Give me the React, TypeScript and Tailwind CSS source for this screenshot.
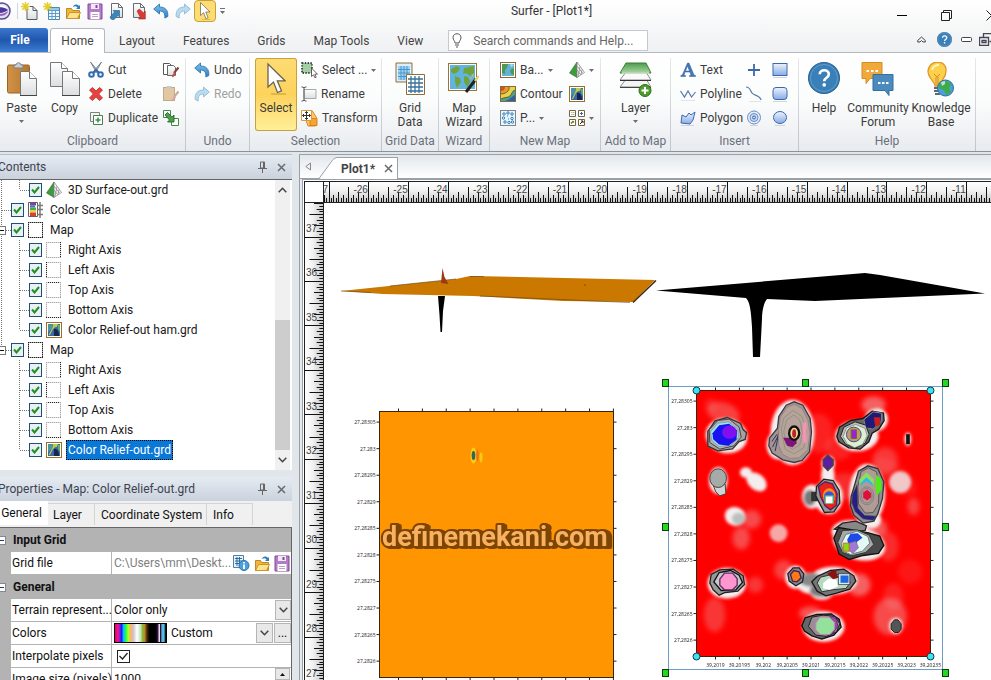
import type { ReactNode } from "react";

/* ---------- shared gradients ---------- */

function Defs() {
  return (
    <svg className="absolute h-0 w-0" aria-hidden="true">
      <defs>
        <linearGradient id="page" x1="0" y1="0" x2="0" y2="1">
          <stop offset="0" stopColor="#ffffff" />
          <stop offset="1" stopColor="#dcdee0" />
        </linearGradient>
        <linearGradient id="blueBox" x1="0" y1="0" x2="0" y2="1">
          <stop offset="0" stopColor="#eef4fd" />
          <stop offset="1" stopColor="#86abe6" />
        </linearGradient>
        <linearGradient id="blueArrow" x1="0" y1="0" x2="0" y2="1">
          <stop offset="0" stopColor="#7cc4ee" />
          <stop offset="1" stopColor="#2b7fc4" />
        </linearGradient>
        <linearGradient id="greenSheet" x1="0" y1="0" x2="0" y2="1">
          <stop offset="0" stopColor="#4d9a4b" />
          <stop offset="1" stopColor="#a9d6a2" />
        </linearGradient>
        <linearGradient id="clip" x1="0" y1="0" x2="1" y2="0">
          <stop offset="0" stopColor="#cf9347" />
          <stop offset="1" stopColor="#b8762c" />
        </linearGradient>
        <linearGradient id="rulerH" x1="0" y1="0" x2="0" y2="1">
          <stop offset="0" stopColor="#ffffff" />
          <stop offset="0.4" stopColor="#f2f2f2" />
          <stop offset="1" stopColor="#c4c4c4" />
        </linearGradient>
        <linearGradient id="rulerV" x1="0" y1="0" x2="1" y2="0">
          <stop offset="0" stopColor="#ffffff" />
          <stop offset="0.4" stopColor="#f2f2f2" />
          <stop offset="1" stopColor="#c4c4c4" />
        </linearGradient>
        <filter id="soft" x="-30%" y="-30%" width="160%" height="160%">
          <feGaussianBlur stdDeviation="4" />
        </filter>
        <filter id="softer" x="-30%" y="-30%" width="160%" height="160%">
          <feGaussianBlur stdDeviation="8" />
        </filter>
      </defs>
    </svg>
  );
}

/* ---------- icons ---------- */

function Ico({ children, w = 16, h = 16, box }: { children: ReactNode; w?: number; h?: number; box?: string }) {
  return (
    <svg width={w} height={h} viewBox={box ?? `0 0 ${w} ${h}`} fill="none" className="block shrink-0" aria-hidden="true">
      {children}
    </svg>
  );
}

const Logo = () => (
  <Ico w={18} h={18}>
    <circle cx="9" cy="9" r="8" fill="#e3dff0" stroke="#5d4a93" strokeWidth="1.5" />
    <path d="M1 8c5-4 10-3 14 0-4 3-9 4-14 2z" fill="#4a3a9b" />
    <path d="M2 11c5 2 9 1 13-2-1 5-9 7-13 2z" fill="#9a5fb5" />
    <path d="M5 4c4-2 8 0 10 3-4-2-7-2-10-3z" fill="#fff" />
  </Ico>
);

const Sparkle = () => (
  <path d="M4.5 0v9M0 4.500h9M1.300 1.300l6.400 6.400M7.700 1.300L1.300 7.700" stroke="#e2cf2e" strokeWidth="1.500" />
);

const NewDoc = () => (
  <Ico w={17} h={18}>
    <path d="M6 4.500h6l4 4V17.500H6z" fill="url(#page)" stroke="#555c66" />
    <path d="M12 4.500v4h4" stroke="#555c66" />
    <Sparkle />
  </Ico>
);

const NewSheet = () => (
  <Ico w={17} h={18}>
    <path d="M5.500 5.500h11v12h-11z" fill="#f4f9fd" stroke="#4c88b5" />
    <path d="M6 8.500h10M6 11.500h10M6 14.500h10M9 6v11M12.500 6v11" stroke="#5f9cc8" />
    <path d="M6 6h10v2H6z" fill="#9cc7e4" />
    <Sparkle />
  </Ico>
);

const OpenFolder = () => (
  <Ico w={17} h={17}>
    <path d="M1.500 15.500V5.500h5l1 2h7v8z" fill="#f0b53d" stroke="#bf8a22" />
    <path d="M1.500 15.500l3-6h11l-3 6z" fill="#ffe28a" stroke="#c9962e" />
    <path d="M8 4c1-3 4-3 6-1l1-1v4h-4l1.500-1.500C11 3 9.500 3 8 4z" fill="#2f80b8" />
  </Ico>
);

const Save = () => (
  <Ico w={16} h={17}>
    <path d="M1 1h14v15H1z" fill="#b27cc6" stroke="#83489c" />
    <path d="M4 1h8v5H4z" fill="#f3e9f6" />
    <path d="M8.500 2h2v3h-2z" fill="#83489c" />
    <path d="M3.500 9h9v7h-9z" fill="#fff" />
    <path d="M5 11.500h6M5 13.500h6" stroke="#b9a3c4" />
  </Ico>
);

const PageArrow = ({ red }: { red?: boolean }) => (
  <Ico w={16} h={18}>
    <path d="M2.500 1.500h7l4 4v10h-11z" fill="url(#page)" stroke="#666c74" />
    <path d="M9.500 1.500v4h4" stroke="#666c74" />
    {red ? (
      <path d="M6 9l2.500-2 4 4 1.800-1.800V17H7.500l1.800-1.800z" fill="#dc3a34" stroke="#a3201c" strokeWidth=".6" />
    ) : (
      <path d="M2 17l-1-2 4.500-5L4 8.500h6.500v6.500L9 13.300 4.500 18z" fill="#3a86b8" stroke="#225f8a" strokeWidth=".6" />
    )}
  </Ico>
);

const Undo = () => (
  <Ico>
    <path
      d="M.7 6L6.500 1v3c5.500 0 8.800 3 8.300 9.500l-3 1.500c.5-4.500-1.300-7-5.300-7v3z"
      fill="url(#blueArrow)"
      stroke="#2869a3"
      strokeWidth=".8"
    />
  </Ico>
);

const Redo = () => (
  <Ico>
    <path
      d="M15.300 6L9.500 1v3C4 4 .7 7 1.200 13.500l3 1.500c-.5-4.500 1.300-7 5.300-7v3z"
      fill="#b9dcf0"
      stroke="#8ab4d0"
      strokeWidth=".8"
    />
  </Ico>
);

const Cursor = ({ w = 12, h = 18 }: { w?: number; h?: number }) => (
  <Ico w={w} h={h} box="0 0 20 32">
    <path d="M2 1v23l5.500-5 4 10.500 4-1.700-4.200-10H19z" fill="#fff" stroke="#6b6350" strokeWidth="1.300" />
    <path d="M5 31h15" stroke="#b09030" strokeWidth=".8" />
  </Ico>
);

const PasteIcon = () => (
  <Ico w={30} h={34}>
    <rect x="0.500" y="3" width="22" height="28" rx="1.500" fill="url(#clip)" stroke="#9a6427" />
    <path d="M7 5V3h2c0-3 5-3 5 0h2v3H7z" fill="#c9ccd0" stroke="#7d8085" />
    <path d="M13.500 9.500h9l7 7v17h-16z" fill="url(#page)" stroke="#777" />
    <path d="M22.500 9.500v7h7" fill="#fff" stroke="#777" />
    <path d="M13 33.500h17" stroke="#444" />
  </Ico>
);

const CopyIcon = () => (
  <Ico w={30} h={34}>
    <path d="M.5.500h11l6 6v18H.5z" fill="url(#page)" stroke="#777" />
    <path d="M11.500.500v6h6" fill="#fff" stroke="#777" />
    <path d="M12.500 9.500h10l7 7v17h-17z" fill="url(#page)" stroke="#777" />
    <path d="M22.500 9.500v7h7" fill="#fff" stroke="#777" />
    <path d="M12 33.500h18" stroke="#444" />
  </Ico>
);

const Cut = () => (
  <Ico>
    <path d="M2.500 0l8 9.500-2 1zM13.500 0l-8 9.500 2 1z" fill="#b8c2cc" stroke="#64717d" strokeWidth=".8" />
    <circle cx="3.500" cy="12.500" r="2.300" stroke="#2f6cb0" strokeWidth="2" />
    <circle cx="12.500" cy="12.500" r="2.300" stroke="#2f6cb0" strokeWidth="2" />
    <path d="M5.500 10.500L8 8l2.500 2.500" stroke="#2f6cb0" strokeWidth="1.800" />
  </Ico>
);

const Delete = () => (
  <Ico>
    <path
      d="M1.500 4L4.500 1.500 8 5l3.500-3.500 3 2.500-3.800 4 3.800 4-3 2.500L8 11l-3.500 3.500-3-2.500 3.800-4z"
      fill="#ea4040"
      stroke="#c22626"
      strokeWidth=".8"
    />
  </Ico>
);

const Duplicate = () => (
  <Ico>
    <path d="M2.500 2.500h9v9h-9z" fill="#f2f5f2" stroke="#7a857c" />
    <path d="M5.500 5.500h9v9h-9z" fill="#fff" stroke="#4d7a52" />
    <path d="M10 7.500v5M7.500 10h5" stroke="#2f9440" strokeWidth="1.500" />
  </Ico>
);

const CopyFormat = () => (
  <Ico>
    <path d="M.5 1.500h6l2 2v9h-8z" fill="#fff" stroke="#555" />
    <path d="M4.500 3.500h6l2 2v8h-8z" fill="url(#page)" stroke="#666" />
    <path d="M15.500 5.500L11 11" stroke="#874038" strokeWidth="2" />
    <path d="M11.500 10l1.500 1.500-3 4-1.500-1.500z" fill="#c05248" />
  </Ico>
);

const PasteFormat = () => (
  <Ico>
    <rect x=".5" y="1.500" width="11" height="13" fill="#e2c7a2" stroke="#c3aa88" />
    <path d="M3.500 0h5v3h-5z" fill="#c9c9c9" />
    <path d="M15.500 5.500L11 11" stroke="#c7a79e" strokeWidth="2" />
    <path d="M11.500 10l1.500 1.500-3 4-1.500-1.500z" fill="#d9a59c" />
  </Ico>
);

const MoveCopy = () => (
  <Ico>
    <path d="M.5.500h7v7h-7zM8.500 8.500h7v7h-7z" fill="#fff" stroke="#3f8a45" />
    <path d="M2 5l2.500-2.500L9 7l2-2v7H4.500l2-2z" fill="#4aa04a" stroke="#1f5a24" strokeWidth=".8" />
  </Ico>
);

const BlockSelect = () => (
  <Ico w={17}>
    <path d="M1 1h10v10H1z" fill="#a4cfa4" stroke="#111" strokeWidth="1.400" strokeDasharray="1.400 1.400" />
    <path d="M10.500 6v8.500l2-1.700 1.400 3 1.300-.6-1.400-3H16.500z" fill="#fff" stroke="#444" strokeWidth=".8" />
  </Ico>
);

const Rename = () => (
  <Ico>
    <path d="M3 3.500h12v9H3z" fill="url(#page)" stroke="#a8a8a8" />
    <path d="M.5 1h1.500L3 2l1-1h1.500M3 2v12M.5 15h1.500L3 14l1 1h1.500" stroke="#555" />
  </Ico>
);

const Transform = () => (
  <Ico w={17} h={18}>
    <path d="M3 5l8-3.500 4.500 7-1 8.500H7z" fill="#ffc766" stroke="#d58a1d" />
    <path d="M9 9.500h7v7H9z" fill="#f5a534" stroke="#d5811d" />
    <path d="M.5 1.500h10v10H.5z" fill="#fff" stroke="#e09a35" />
    <path d="M5.500 2.500v8M1.500 6.500h8M4 4l1.500-1.500L7 4M4 9l1.500 1.500L7 9M3 5L1.500 6.500 3 8M8 5l1.500 1.500L8 8" stroke="#333" />
  </Ico>
);

const GridData = () => (
  <Ico w={30} h={34}>
    <path d="M1 1h16v19H1z" fill="#dceffa" stroke="#8d6d3a" />
    <path d="M3 4h12v14H3z" fill="#a5d3ef" />
    <path d="M3 7.500h12M3 11h12M3 14.500h12M6 4v14M9 4v14M12 4v14" stroke="#4596cf" />
    <path d="M11.500 12.500h18v20h-18z" fill="#fff" stroke="#8d6d3a" />
    <path d="M13 17h15M13 21h15M13 25h15M13 29h15M16 14v17M20 14v17M24 14v17" stroke="#3b7297" strokeWidth="1.300" />
  </Ico>
);

const MapWizard = () => (
  <Ico w={32} h={34}>
    <rect x=".5" y="1.500" width="28" height="27" fill="#fff" stroke="#9a7436" />
    <rect x="2" y="3" width="25" height="24" fill="#62b4e0" />
    <path d="M3 7l6-3 3 2-2 4-4 2-3-2zM7 14l5 2 1 4-4 6-2-6zM16 6l10-2v7l-4 3-4-3-3 1zM16 14l4 1 2 5-3 5-3-5zM23 21l4-2v4z" fill="#6fa43b" />
    <path d="M18 30L28 17" stroke="#222" strokeWidth="3" />
    <path d="M27 19l3-4" stroke="#e6d478" strokeWidth="2.500" />
    <path d="M24 12l1 3M31 14l-2 1M22 16h2" stroke="#f6b52e" />
  </Ico>
);

const BaseMap = () => (
  <Ico>
    <rect x=".5" y=".5" width="15" height="15" fill="#fff" stroke="#8a6a34" />
    <rect x="2" y="2" width="12" height="12" fill="#63b2dc" />
    <path d="M2 2h6l-1 4-2 2v4l-3-1zM10 8l4-2v7l-3-1z" fill="#4e9a52" />
    <path d="M10 2l4 1-3 2z" fill="#b9ddec" />
  </Ico>
);

const Contour = () => (
  <Ico>
    <rect x=".5" y=".5" width="15" height="15" fill="#e8d24a" stroke="#8a6a34" />
    <path d="M1 15h14V4c-3 1-3 4-5 6s-6 1-9 3z" fill="#4aa58a" />
    <path d="M5 15h10V9c-3 1-4 4-10 6z" fill="#2d62ac" />
    <path d="M1 1h8c1 4-4 7-8 7z" fill="#e89b30" />
    <path d="M1 1h4c0 3-2 4-4 4z" fill="#cf5424" />
    <path d="M9 1c1 4-4 7-8 7M15 4c-3 1-3 4-5 6s-6 1-9 3" stroke="#443a1c" strokeWidth=".7" />
  </Ico>
);

const PostMap = () => (
  <Ico>
    <rect x=".5" y=".5" width="15" height="15" fill="#e9f4fb" stroke="#7e8790" />
    {[[4, 4], [8, 3], [12, 4], [3.500, 8], [12, 8.500], [5, 12], [9, 12.500], [12.500, 12]].map(([x, y]) => (
      <circle key={`${x}-${y}`} cx={x} cy={y} r="1.200" stroke="#2f7db5" />
    ))}
    <path d="M7 6h1M8 9h1" stroke="#2f7db5" />
  </Ico>
);

const Surface3D = () => (
  <Ico>
    <path d="M8 0L.5 11 8 15.500z" fill="#3f9a3f" stroke="#2c6e2c" strokeWidth=".6" />
    <path d="M8 0l7.500 10.500L8 15.500z" fill="#fafafa" stroke="#888" strokeWidth=".8" />
    <path d="M8 4l5.500 7M8 8l3.500 4.500M11 4.500L9 14.500M13 7.500l-1 5" stroke="#888" strokeWidth=".8" />
  </Ico>
);

const Relief = () => (
  <Ico>
    <rect x=".5" y=".5" width="15" height="15" fill="#fff" stroke="#9a6f2a" />
    <rect x="2" y="2" width="12" height="12" fill="#3b67a8" />
    <path d="M2 2h5l-1 5-4 3z" fill="#4a93a0" />
    <path d="M7 2h5l-1 3c-3 0-4 2-5 4l-2 4H3c1-4 4-6 4-11z" fill="#b9cc50" />
    <path d="M8 7c3-1 5 2 5 7H8z" fill="#18264e" />
    <path d="M12 3h2v7l-2-3z" fill="#58b06a" />
  </Ico>
);

const SpecialMap = () => (
  <Ico>
    <path d="M.5.500h6v6h-6zM9.500.500h6v6h-6zM.5 9.500h6v6h-6zM9.500 9.500h6v6h-6z" fill="#fff" stroke="#7d6238" />
    <path d="M2.500 2.500h.8M4.500 2.500h.8M2.500 4.500h.8M4.500 4.500h.8" stroke="#3a7a4a" />
    <path d="M12.500 2v3M11 3.500h3" stroke="#2b6aa5" />
    <path d="M2 13.500l2-2 1 1" stroke="#4a8a3a" strokeWidth="1.500" />
    <path d="M11 14l3-3M12 11h2v2" stroke="#222" />
  </Ico>
);

const LayerIcon = () => (
  <Ico w={33} h={36}>
    <path d="M7 17h20l5 8H1z" fill="#f4f4f4" stroke="#8a8a8a" />
    <path d="M1 25.500h31" stroke="#444" />
    <path d="M7 10h20l5 8H1z" fill="#fafafa" stroke="#8a8a8a" />
    <path d="M1 18.500h31" stroke="#333" />
    <path d="M7 1h20l5 10H1z" fill="url(#greenSheet)" stroke="#3a7f38" />
    <path d="M3 11h27" stroke="#fff" />
    <circle cx="26" cy="28.500" r="6" fill="#4d9c2d" stroke="#2e6b18" />
    <path d="M26 25v7M22.500 28.500h7" stroke="#fff" strokeWidth="2" />
  </Ico>
);

const TextIcon = () => (
  <Ico>
    <path d="M7.500 1h1.500l5 12 1.500.5v1H9.500v-1l1.500-.5-1-3H5l-1 3 1.500.5v1H.8v-1l1.500-.5zM5.500 9h4L7.500 4z" fill="#4577b8" stroke="#2f5c99" strokeWidth=".5" />
  </Ico>
);

const PolylineIcon = () => (
  <Ico>
    <path d="M.5 5l4 6 3.500-6 3.500 6 4-5" stroke="#5878a8" strokeWidth="1.200" />
    <path d="M1 14.500h14" stroke="#dfe4ec" />
  </Ico>
);

const PolygonIcon = () => (
  <Ico>
    <path d="M1 13l1-8 4 2 3-4 2 2 4-3-2 8-3 4z" fill="url(#blueBox)" stroke="#3d68ad" />
    <path d="M1 15.500h13" stroke="#cfd5de" />
  </Ico>
);

const PlusIcon = () => (
  <Ico>
    <path d="M8 2v12M2 8h12" stroke="#3d68ad" strokeWidth="1.800" />
  </Ico>
);

const Spline = () => (
  <Ico>
    <path d="M0 1c4 0 4 3 6 6s8 2 9 7" stroke="#5878a8" strokeWidth="1.200" />
    <path d="M3 15.500h12" stroke="#dfe4ec" />
  </Ico>
);

const Rings = () => (
  <Ico>
    <circle cx="8" cy="7.500" r="6.500" fill="#e6eefb" stroke="#6b8cc4" />
    <circle cx="8" cy="7.500" r="4" fill="#c9dbf5" stroke="#6b8cc4" />
    <circle cx="8" cy="7.500" r="1.500" stroke="#3d68ad" />
    <path d="M4 15.500h8" stroke="#cfd5de" />
  </Ico>
);

const BoxIcon = ({ rx = 0 }: { rx?: number }) => (
  <Ico>
    <rect x="1" y="1.500" width="14" height="12" rx={rx} fill="url(#blueBox)" stroke="#3d68ad" />
    <path d="M1 15.500h14" stroke="#cfd5de" />
  </Ico>
);

const OvalIcon = () => (
  <Ico>
    <ellipse cx="8" cy="7.500" rx="6.500" ry="6" fill="url(#blueBox)" stroke="#3d68ad" />
    <path d="M3 15.500h10" stroke="#cfd5de" />
  </Ico>
);

const HelpIcon = ({ s }: { s: number }) => (
  <svg width={s} height={s} viewBox="0 0 30 30" className="block shrink-0" aria-hidden="true">
    <circle cx="15" cy="15" r="14.500" fill="#3a7fb8" stroke="#2d6596" />
    <circle cx="15" cy="15" r="12.700" fill="none" stroke="#6ba6d3" strokeWidth=".7" />
    <path d="M11 11.500c0-5 8.500-5 8.500 0 0 3.500-4.300 3-4.300 6.500" fill="none" stroke="#fff" strokeWidth="2.500" />
    <circle cx="15.200" cy="21.500" r="1.700" fill="#fff" />
  </svg>
);

const Community = () => (
  <Ico w={34} h={34}>
    <path d="M1 .5h20v16H9l-4 5v-5H1z" fill="#f0a93a" stroke="#d38b22" />
    <path d="M12 12.500h20v16h-4v5l-4-5H12z" fill="#4a8abc" stroke="#336f9f" />
    <path d="M5.500 9h2.500M10 9h2.500M14.500 9h2.500M17 21h2.500M21 21h2.500M25 21h2.500" stroke="#fff" strokeWidth="2" />
  </Ico>
);

const Knowledge = () => (
  <Ico w={30} h={36}>
    <path d="M9 24c0-5-7-7-7-15C3-3 21-3 20 9c0 8-6 9-6 15z" fill="#fbd04a" stroke="#e0982a" strokeWidth="1.300" />
    <path d="M8 12l3 3 3-3M10 15v8M12 15v8" stroke="#e0862a" />
    <path d="M6 8c1-4 4-5 7-5" stroke="#fff3b8" strokeWidth="2" />
    <path d="M8 26h7M8 29h7M9 32h5" stroke="#5d6a75" strokeWidth="2" />
    <circle cx="19.500" cy="26" r="8" fill="#4d9fd8" stroke="#2a6fa5" />
    <path d="M13 22l7-3 6 3-3 4 2 4-5 3-2-5-5-2z" fill="#3faa4a" />
    <path d="M15 20l4-1v3l-3 2z" fill="#b9e6bd" />
  </Ico>
);

const ColorScale = () => (
  <Ico>
    <path d="M.5.500h9v14h-9z" fill="#fff" stroke="#6b5b5b" />
    <path d="M2 1h6v2.500H2z" fill="#8040a8" />
    <path d="M2 3.500h5v2H2z" fill="#3f6fd0" />
    <path d="M2 5.500h6v2.500H2z" fill="#3fae4f" />
    <path d="M2 8h6v2.500H2z" fill="#efcf3a" />
    <path d="M2 10.500h6V14H2z" fill="#d84030" />
    <path d="M12 0v16M9 3.500h6M9 7.500h6M9 12.500h6" stroke="#7a7a7a" strokeWidth="1.500" />
  </Ico>
);

const GridInfo = () => (
  <Ico w={17}>
    <path d="M.5.500h10v12H.5z" fill="#e7f2fb" stroke="#4d7fa8" />
    <path d="M2 3.500h7M2 6h7M2 8.500h7M4 2v9M6.500 2v9" stroke="#2f6c9b" />
    <circle cx="11" cy="10.500" r="5" fill="#4b9ddb" stroke="#2c72aa" />
    <path d="M11 7v1.500M11 9.500V14" stroke="#fff" strokeWidth="1.800" />
  </Ico>
);

const AxisBox = ({ side }: { side: string }) => {
  const dark = (s: string) => (side === s || side === "all" ? "#222" : "#aaa");
  return (
    <Ico w={15} h={16}>
      <path d="M.5.500h14v15H.5z" stroke={side === "all" ? "#999" : "#dcdcdc"} />
      <path d="M0 .500h15" stroke={dark("top")} strokeDasharray="1 1" />
      <path d="M0 15.500h15" stroke={dark("bottom")} strokeDasharray="1 1" />
      <path d="M.5 0v16" stroke={dark("left")} strokeDasharray="1 1" />
      <path d="M14.500 0v16" stroke={dark("right")} strokeDasharray="1 1" />
    </Ico>
  );
};

const Caret = () => (
  <svg width="5" height="3" viewBox="0 0 5 3" className="block shrink-0" aria-hidden="true">
    <path d="M0 0h5L2.500 3z" fill="#6e6e6e" />
  </svg>
);

const Pin = () => (
  <Ico w={9} h={12}>
    <path d="M2.500 1h4v6h-4zM5.500 1v6M0 7.500h9M4.500 8v4" stroke="#666" />
  </Ico>
);

const Cross = ({ s = 9 }: { s?: number }) => (
  <Ico w={s} h={s} box="0 0 9 9">
    <path d="M1 1l7 7M8 1L1 8" stroke="#6a6a6a" strokeWidth="1.500" />
  </Ico>
);

const Chevron = ({ up }: { up?: boolean }) => (
  <Ico w={9} h={6}>
    <path d={up ? "M.7 5.300l3.800-4 3.800 4" : "M.7.700l3.800 4 3.800-4"} stroke="#444" strokeWidth="1.500" />
  </Ico>
);

/* ---------- title bar and tabs ---------- */

function TitleBar() {
  const quick: [string, ReactNode][] = [
    ["New plot", <NewDoc />],
    ["New worksheet", <NewSheet />],
    ["Open", <OpenFolder />],
    ["Save", <Save />],
    ["Import", <PageArrow />],
    ["Export", <PageArrow red />],
    ["Undo", <Undo />],
    ["Redo", <Redo />],
  ];
  return (
    <header className="grid h-7 grid-cols-[1fr_auto_1fr] items-start">
      <div className="-ml-[7px] flex items-center">
        <Logo />
        <span className="ml-[6px] h-4 w-px bg-gray-300" />
        {quick.map(([label, icon]) => (
          <button key={label} aria-label={label} className="flex h-5 w-[22px] items-center justify-center">
            {icon}
          </button>
        ))}
        <button aria-label="Select" className="flex h-[22px] w-[22px] items-center justify-center rounded-sm border border-[#c9a13c] bg-[#fddc74]">
          <Cursor />
        </button>
        <button aria-label="Customize" className="flex flex-col items-center gap-[2px] pl-1">
          <span className="h-px w-[5px] bg-gray-500" />
          <Caret />
        </button>
      </div>
      <h1 className="pl-[112px] pt-[3px] text-[12px] leading-4 text-[#333]">Surfer - [Plot1*]</h1>
      <div className="-mr-[23px] flex justify-end pt-[3px]">
        <button aria-label="Minimize" className="flex h-6 w-[45px] items-center justify-center">
          <span className="h-px w-[10px] bg-black" />
        </button>
        <button aria-label="Restore" className="flex h-6 w-[45px] items-center justify-center">
          <Ico w={11} h={11}>
            <path d="M.5 2.500h8v8h-8zM2.500 2.500v-2h8v8h-2" stroke="#222" />
          </Ico>
        </button>
        <button aria-label="Close" className="flex h-6 w-[45px] items-center justify-center">
          <Ico w={11} h={11}>
            <path d="M.5.500l10 10M10.500.500l-10 10" stroke="#222" />
          </Ico>
        </button>
      </div>
    </header>
  );
}

function TabBar() {
  return (
    <nav className="flex h-[25px] items-stretch border-b border-[#b4bac4] text-[#444]">
      <button className="w-12 rounded-tr-[3px] bg-gradient-to-b from-[#3b78cf] via-[#1f57ac] to-[#3c7dd4] pr-2 font-bold text-white">File</button>
      <button className="-mb-px ml-[2px] w-[55px] rounded-t-[3px] border border-b-0 border-[#b4bac4] bg-white">Home</button>
      {["Layout", "Features", "Grids", "Map Tools", "View"].map((tab) => (
        <button key={tab} className="px-[14px] pt-px">
          {tab}
        </button>
      ))}
      <div className="ml-[11px] mt-[2px] flex h-[21px] w-[200px] items-center border border-[#c6cad0] bg-white pl-[3px]">
        <Ico w={10} h={15}>
          <path d="M3 10c0-2-2-3-2-5.500C1-.5 9-.5 9 4.500 9 7 7 8 7 10zM3 12h4M4 14h2" stroke="#555" />
        </Ico>
        <input
          aria-label="Search commands and Help"
          placeholder="Search commands and Help..."
          className="ml-[11px] min-w-0 flex-1 bg-transparent placeholder-[#666] outline-none"
        />
      </div>
      <div className="-mr-[3px] ml-auto flex items-center gap-[9px] pb-px">
        <button aria-label="Collapse ribbon" className="mr-[2px]">
          <Ico w={9} h={8}>
            <path d="M.7 4.500L4.500 1l3.800 3.500v1.500L6 6 4.500 4.500 3 6 .7 6z" stroke="#444" />
          </Ico>
        </button>
        <button aria-label="Help">
          <HelpIcon s={15} />
        </button>
        <button aria-label="Minimize document">
          <Ico w={11} h={5}>
            <rect x=".5" y=".5" width="10" height="4" rx="1" fill="#fff" stroke="#444" />
          </Ico>
        </button>
        <button aria-label="Restore document" className="-ml-[2px]">
          <Ico w={15} h={13}>
            <path d="M4.500 4V.500h10v8h-4M.5 4.500h9v8h-9zM3 7.500h4v2H3z" stroke="#445" strokeWidth="1.300" />
          </Ico>
        </button>
      </div>
    </nav>
  );
}

/* ---------- ribbon ---------- */

function Group({ label, className, children }: { label: string; className: string; children: ReactNode }) {
  return (
    <section className={`flex shrink-0 ${className}`}>
      <div className="flex min-w-0 flex-1 flex-col">
        <div className="flex h-[73px]">{children}</div>
        <h2 className="whitespace-nowrap text-center leading-5 text-[#6a7079]">{label}</h2>
      </div>
      <span className="w-px bg-gradient-to-b from-[#e6e8eb] to-[#bfc4cb]" />
    </section>
  );
}

function Big({ icon, label, second, arrow, className }: { icon: ReactNode; label: string; second?: string; arrow?: boolean; className?: string }) {
  return (
    <button className={`flex h-[73px] shrink-0 flex-col items-center pt-1 leading-[14px] text-[#3b3b3b] ${className ?? ""}`}>
      <span className="mb-[5px] flex h-[34px] items-start">{icon}</span>
      <span>{label}</span>
      {second && <span>{second}</span>}
      {arrow && (
        <span className="mt-[5px]">
          <Caret />
        </span>
      )}
    </button>
  );
}

function Small({ icon, label, arrow, dim }: { icon: ReactNode; label?: string; arrow?: boolean; dim?: boolean }) {
  return (
    <button className={`flex h-6 items-center gap-1 whitespace-nowrap ${dim ? "text-[#a0a0a0]" : "text-[#3b3b3b]"}`}>
      {icon}
      {label && <span>{label}</span>}
      {arrow && <Caret />}
    </button>
  );
}

function Ribbon() {
  return (
    <div className="flex overflow-hidden border-b border-[#8b929c] bg-gradient-to-b from-white via-[#fbfcfc] to-[#e8ebef] pt-[5px]">
      <Group label="Clipboard" className="w-[186px]">
        <Big icon={<PasteIcon />} label="Paste" arrow className="w-[43px]" />
        <Big icon={<CopyIcon />} label="Copy" className="w-[43px]" />
        <div className="ml-[2px]">
          <Small icon={<Cut />} label="Cut" />
          <Small icon={<Delete />} label="Delete" />
          <Small icon={<Duplicate />} label="Duplicate" />
        </div>
        <div className="ml-auto mr-[6px]">
          <Small icon={<CopyFormat />} />
          <Small icon={<PasteFormat />} />
          <Small icon={<MoveCopy />} />
        </div>
      </Group>
      <Group label="Undo" className="w-[64px]">
        <div className="ml-2">
          <Small icon={<Undo />} label="Undo" />
          <Small icon={<Redo />} label="Redo" dim />
        </div>
      </Group>
      <Group label="Selection" className="w-[132px]">
        <Big
          icon={<Cursor w={20} h={34} />}
          label="Select"
          className="ml-[5px] w-[42px] rounded-[3px] bg-gradient-to-b from-[#fddc74] via-[#fdd35c] to-[#fff09a] ring-1 ring-[#c9a13c] ring-inset"
        />
        <div className="ml-1">
          <Small icon={<BlockSelect />} label="Select ..." arrow />
          <Small icon={<Rename />} label="Rename" />
          <Small icon={<Transform />} label="Transform" />
        </div>
      </Group>
      <Group label="Grid Data" className="w-[57px]">
        <Big icon={<GridData />} label="Grid" second="Data" className="w-full" />
      </Group>
      <Group label="Wizard" className="w-[51px]">
        <Big icon={<MapWizard />} label="Map" second="Wizard" className="w-full" />
      </Group>
      <Group label="New Map" className="w-[111px]">
        <div className="ml-[10px] w-[69px]">
          <Small icon={<BaseMap />} label="Ba..." arrow />
          <Small icon={<Contour />} label="Contour" />
          <Small icon={<PostMap />} label="P..." arrow />
        </div>
        <div>
          <Small icon={<Surface3D />} arrow />
          <Small icon={<Relief />} />
          <Small icon={<SpecialMap />} arrow />
        </div>
      </Group>
      <Group label="Add to Map" className="w-[70px]">
        <Big icon={<LayerIcon />} label="Layer" arrow className="w-full" />
      </Group>
      <Group label="Insert" className="w-[128px]">
        <div className="ml-[9px] w-[66px]">
          <Small icon={<TextIcon />} label="Text" />
          <Small icon={<PolylineIcon />} label="Polyline" />
          <Small icon={<PolygonIcon />} label="Polygon" />
        </div>
        <div>
          <Small icon={<PlusIcon />} />
          <Small icon={<Spline />} />
          <Small icon={<Rings />} />
        </div>
        <div className="ml-[10px]">
          <Small icon={<BoxIcon />} />
          <Small icon={<BoxIcon rx={3} />} />
          <Small icon={<OvalIcon />} />
        </div>
      </Group>
      <Group label="Help" className="w-[177px]">
        <Big icon={<HelpIcon s={32} />} label="Help" className="w-[50px]" />
        <Big icon={<Community />} label="Community" second="Forum" className="w-[58px]" />
        <Big icon={<Knowledge />} label="Knowledge" second="Base" className="w-[68px]" />
      </Group>
    </div>
  );
}

/* ---------- contents tree ---------- */

type Node = { label: string; level: 1 | 2; icon: ReactNode; open?: boolean; last?: boolean; selected?: boolean };

const axes: Node[] = [
  { label: "Right Axis", level: 2, icon: <AxisBox side="right" /> },
  { label: "Left Axis", level: 2, icon: <AxisBox side="left" /> },
  { label: "Top Axis", level: 2, icon: <AxisBox side="top" /> },
  { label: "Bottom Axis", level: 2, icon: <AxisBox side="bottom" /> },
];

const tree: Node[] = [
  { label: "3D Surface-out.grd", level: 2, icon: <Surface3D />, last: true },
  { label: "Color Scale", level: 1, icon: <ColorScale /> },
  { label: "Map", level: 1, icon: <AxisBox side="all" />, open: true },
  ...axes,
  { label: "Color Relief-out ham.grd", level: 2, icon: <Relief />, last: true },
  { label: "Map", level: 1, icon: <AxisBox side="all" />, open: true, last: true },
  ...axes,
  { label: "Color Relief-out.grd", level: 2, icon: <Relief />, last: true, selected: true },
];

function TreeRow({ node, id, root }: { node: Node; id: string; root: boolean }) {
  const child = node.level === 2;
  return (
    <li className="flex h-5 items-center">
      <svg width={child ? 29 : 11} height="20" className="block shrink-0" aria-hidden="true">
        <g stroke="#777" strokeDasharray="1 1" fill="none">
          {root && <path d={node.last && !child ? "M1.500 0v10" : "M1.500 0v20"} />}
          {child && <path d={node.last ? "M19.500 0v10" : "M19.500 0v20"} />}
          <path d={child ? "M20 10.500h9" : "M2 10.500h9"} />
        </g>
        {node.open && (
          <g>
            <rect x="-3.500" y="6.500" width="9" height="8" fill="#fff" stroke="#777" />
            <path d="M0 10.500h4" stroke="#111" />
          </g>
        )}
      </svg>
      <span className="grid shrink-0 place-items-center">
        <input
          id={id}
          type="checkbox"
          defaultChecked
          className="col-start-1 row-start-1 h-[14px] w-[13px] appearance-none border border-[#1f4e79] bg-[#eaf1f4]"
        />
        <svg width="9" height="8" viewBox="0 0 9 8" className="pointer-events-none col-start-1 row-start-1" aria-hidden="true">
          <path d="M1 3.500L3.500 6.500 8 1" fill="none" stroke="#239023" strokeWidth="2" />
        </svg>
      </span>
      <span className="ml-1 flex w-[20px] shrink-0 justify-start">{node.icon}</span>
      <label
        htmlFor={id}
        className={`whitespace-nowrap border border-dotted px-px leading-[18px] ${
          node.selected ? "border-black bg-[#0a78d7] text-white" : "border-transparent text-[#1a1a1a]"
        }`}
      >
        {node.label}
      </label>
    </li>
  );
}

function PanelHeader({ title }: { title: string }) {
  return (
    <div className="flex h-6 items-center bg-gradient-to-b from-[#e6ebf2] to-[#cad2dd] pr-[6px] text-[#3c4450]">
      <h2 className="-ml-[2px] min-w-0 flex-1 whitespace-nowrap">{title}</h2>
      <button aria-label="Auto hide">
        <Pin />
      </button>
      <button aria-label="Close panel" className="ml-[10px]">
        <Cross />
      </button>
    </div>
  );
}

function Contents() {
  return (
    <section className="flex flex-col border-t border-[#b8bec6]">
      <PanelHeader title="Contents" />
      <div className="flex border-t border-[#666] bg-white">
        <ul className="min-w-0 flex-1 pb-[10px]">
          {tree.map((node, i) => (
            <TreeRow key={i} node={node} id={`node-${i}`} root={i < 9} />
          ))}
        </ul>
        <div className="flex w-[15px] flex-col items-center bg-[#f0f0f0]">
          <button aria-label="Scroll up" className="flex h-5 items-center">
            <Chevron up />
          </button>
          <span className="mt-[120px] w-full flex-1 bg-[#cdcdcd]" />
          <button aria-label="Scroll down" className="flex h-5 items-center">
            <Chevron />
          </button>
        </div>
        <span className="w-[2px]" />
      </div>
    </section>
  );
}

/* ---------- properties ---------- */

function Section({ title }: { title: string }) {
  return (
    <div className="flex h-6 items-center bg-[#b3b3b3] font-bold text-[#111]">
      <span className="flex h-[9px] w-[6px] items-center border border-l-0 border-[#888] bg-white">
        <span className="h-px w-[4px] bg-[#223a70]" />
      </span>
      <h3 className="ml-[7px]">{title}</h3>
    </div>
  );
}

function Field({ label, htmlFor, children }: { label: string; htmlFor: string; children: ReactNode }) {
  return (
    <div className="flex h-[23px] items-stretch bg-[#b3b3b3] pl-[11px] text-[#111]">
      <label htmlFor={htmlFor} className="flex w-[100px] items-center whitespace-nowrap border-b border-[#b3b3b3] bg-white pl-px">
        {label}
      </label>
      <div className="ml-px flex min-w-0 flex-1 items-center border-b border-[#b3b3b3] bg-white pl-[2px]">{children}</div>
    </div>
  );
}

const colorMap =
  "bg-[linear-gradient(90deg,#e0007a_0%,#ff1080_6%,#8a20d0_9%,#1020ff_13%,#10c0ff_17%,#10ff50_21%,#b0ff20_26%,#ffb070_31%,#d0c0d0_36%,#ffffff_43%,#c0e8c0_50%,#90b830_54%,#c08830_58%,#402800_63%,#000_68%,#000_80%,#401050_84%,#fff_87%,#111_89%,#70a0f0_92%,#40d0e0_96%,#111_99%)]";

function Properties() {
  const tab = "border-r border-t border-[#d4d4d4] bg-[#f0f0f0] text-left pt-px";
  return (
    <section className="mt-[7px] flex flex-1 flex-col">
      <PanelHeader title="Properties - Map: Color Relief-out.grd" />
      <div className="flex h-[26px] items-start bg-[#f0f0f0] text-[#111]">
        <button className="h-6 w-12 bg-white pr-[6px] text-right">General</button>
        <button className={`mt-[2px] h-[22px] w-[47px] pl-[5px] ${tab}`}>Layer</button>
        <button className={`mt-[2px] h-[22px] w-[112px] pl-[6px] ${tab}`}>Coordinate System</button>
        <button className={`mt-[2px] h-[22px] w-[46px] pl-[6px] ${tab}`}>Info</button>
      </div>
      <div className="flex-1 border-r border-t border-[#666] bg-[#b3b3b3]">
        <Section title="Input Grid" />
        <Field label="Grid file" htmlFor="grid-file">
          <input id="grid-file" readOnly defaultValue="C:\Users\mm\Deskt..." className="w-[119px] min-w-0 bg-transparent text-[#808080] outline-none" />
          <button aria-label="Grid info">
            <GridInfo />
          </button>
          <button aria-label="Open grid" className="ml-1">
            <OpenFolder />
          </button>
          <button aria-label="Save grid" className="ml-[3px]">
            <Save />
          </button>
        </Field>
        <Section title="General" />
        <Field label="Terrain represent..." htmlFor="terrain">
          <select id="terrain" className="min-w-0 flex-1 appearance-none bg-transparent outline-none">
            <option>Color only</option>
          </select>
          <span className="flex h-5 w-[16px] items-center justify-center border border-[#b5b5b5] bg-[#e8e8e8]">
            <Chevron />
          </span>
        </Field>
        <Field label="Colors" htmlFor="colors">
          <span className={`h-5 w-[53px] border border-black ${colorMap}`} />
          <select id="colors" className="ml-1 min-w-0 flex-1 appearance-none bg-transparent outline-none">
            <option>Custom</option>
          </select>
          <span className="flex h-5 w-[17px] items-center justify-center border border-[#b5b5b5] bg-[#e8e8e8]">
            <Chevron />
          </span>
          <button aria-label="Edit colors" className="ml-px h-5 w-[17px] border border-[#b5b5b5] bg-[#e8e8e8] leading-3">
            ...
          </button>
        </Field>
        <Field label="Interpolate pixels" htmlFor="interpolate">
          <span className="ml-[3px] grid place-items-center">
            <input id="interpolate" type="checkbox" defaultChecked className="col-start-1 row-start-1 h-[13px] w-[13px] appearance-none border border-[#222]" />
            <svg width="9" height="8" viewBox="0 0 9 8" className="pointer-events-none col-start-1 row-start-1" aria-hidden="true">
              <path d="M.5 4L3.500 7 8.500 1" fill="none" stroke="#222" strokeWidth="1.300" />
            </svg>
          </span>
        </Field>
        <Field label="Image size (pixels)" htmlFor="image-size">
          <input id="image-size" defaultValue="1000" className="min-w-0 flex-1 bg-transparent outline-none" />
          <button aria-label="Increase" className="mr-px flex h-3 w-[15px] items-center justify-center self-start border border-[#b5b5b5] bg-[#e8e8e8]">
            <Ico w={5} h={3}>
              <path d="M0 3h5L2.500 0z" fill="#111" />
            </Ico>
          </button>
        </Field>
      </div>
    </section>
  );
}

/* ---------- rulers ---------- */

const tickLength = (i: number) => (i % 16 === 0 ? 21 : i % 8 === 0 ? 15 : i % 4 === 0 ? 10 : i % 2 === 0 ? 7 : 4);

function TopRuler() {
  // 39.86px per unit, sixteen divisions each; unit -27 sits 5px in
  const ticks = Array.from({ length: 1200 }, (_, i) => i - 2);
  return (
    <svg className="block h-[21px] min-w-0 flex-1" aria-hidden="true">
      <rect width="100%" height="21" fill="url(#rulerH)" />
      {ticks.map((i) => (
        <path key={i} d={`M${Math.floor(5 + i * 2.491) + 0.5} 20v-${tickLength(i)}`} stroke="#111" />
      ))}
      {Array.from({ length: 40 }, (_, i) => (
        <text key={i} x={4 + i * 39.86} y="11" textAnchor="end" fontSize="10" fill="#444" fontFamily="Liberation Sans, sans-serif">
          {i - 27}
        </text>
      ))}
      <path d="M0 20.500h4000" stroke="#222" />
    </svg>
  );
}

function LeftRuler() {
  const ticks = Array.from({ length: 700 }, (_, i) => i - 12);
  return (
    <svg className="block w-[19px] shrink-0 self-stretch" aria-hidden="true">
      <rect width="19" height="100%" fill="url(#rulerV)" />
      {ticks.map((i) => (
        <path key={i} d={`M18 ${Math.floor(34 + i * 2.778) + 0.5}h-${tickLength(i) * 0.9}`} stroke="#111" />
      ))}
      {Array.from({ length: 30 }, (_, i) => (
        <text key={i} x="1" y={29 + i * 44.450} fontSize="10" fill="#444" fontFamily="Liberation Sans, sans-serif">
          {37 - i}
        </text>
      ))}
      <path d="M18.500 0v3000" stroke="#222" />
    </svg>
  );
}

/* ---------- plot ---------- */

const latitudes = ["27,28305", "27,283", "27,28295", "27,2829", "27,28285", "27,2828", "27,28275", "27,2827", "27,28265", "27,2826"];
const longitudes = ["39,2019", "39,20195", "39,202", "39,20205", "39,2021", "39,20215", "39,2022", "39,20225", "39,2023", "39,20235"];

function MapFrame({ x, y, fill, labels, children }: { x: number; y: number; fill: string; labels?: boolean; children: ReactNode }) {
  return (
    <g transform={`translate(${x} ${y})`}>
      <rect width="234" height="266" fill={fill} />
      {children}
      <rect width="234" height="266" fill="none" stroke="#3a2408" />
      {latitudes.map((lat, i) => (
        <g key={lat}>
          <path d={`M-3 ${10.600 + i * 26.560}h3M234 ${10.600 + i * 26.560}h3`} stroke="#222" />
          <text x="-4" y={12.600 + i * 26.560} textAnchor="end" fontSize="5" fill="#222">
            {lat}
          </text>
        </g>
      ))}
      {longitudes.map((lon, i) => (
        <g key={lon}>
          <path d={`M${19 + i * 23.880} -3v3M${19 + i * 23.880} 266v3`} stroke="#222" />
          {labels && (
            <text x={19 + i * 23.880} y="276" textAnchor="middle" fontSize="5" fill="#222">
              {lon}
            </text>
          )}
        </g>
      ))}
    </g>
  );
}

// soft patches: cx, cy, rx, ry, rotation, opacity
const haze = [
  [205, 130, 50, 32, 20, 0.3], [165, 105, 18, 22, 0, 0.12], [258, 505, 26, 34, 0, 0.35],
  [290, 448, 28, 28, 0, 0.35], [690, 272, 38, 40, 0, 0.25], [775, 410, 18, 26, 0, 0.3],
  [655, 105, 36, 26, 0, 0.45], [765, 605, 36, 36, 0, 0.1], [705, 740, 50, 56, 0, 0.35], [715, 680, 30, 40, 0, 0.15],
  [178, 735, 32, 52, 0, 0.25], [612, 645, 34, 34, 0, 0.45], [720, 320, 80, 34, 40, 0.1], [490, 190, 44, 60, 0, 0.15],
  [550, 235, 40, 36, 0, 0.15], [570, 350, 50, 40, 0, 0.2], [465, 730, 34, 20, 0, 0.4], [670, 475, 26, 26, 0, 0.4],
  [700, 530, 30, 44, 0, 0.2], [300, 645, 24, 24, 0, 0.25], [385, 600, 28, 30, 0, 0.3],
];

// white patches and rims round the anomalies: cx, cy, rx, ry, rotation
const halos = [
  [272, 308, 18, 16, 0], [304, 336, 34, 24, 40], [240, 440, 32, 28, 20],
  [214, 198, 63, 52, 10], [412, 188, 66, 98, 0], [370, 225, 36, 44, 0], [605, 198, 65, 46, 0], [663, 150, 36, 34, -40],
  [758, 208, 10, 20, 0], [519, 282, 20, 24, 0], [189, 332, 28, 40, 0], [520, 380, 43, 53, 0], [470, 380, 30, 36, 0],
  [518, 318, 20, 40, 0], [636, 372, 54, 90, 0], [650, 450, 28, 26, 0], [585, 485, 56, 34, 0], [612, 520, 80, 50, 15], [215, 640, 58, 46, 0],
  [421, 622, 31, 35, 0], [465, 640, 40, 32, 0], [535, 632, 72, 42, 0], [500, 656, 40, 34, 0], [505, 770, 63, 46, 0], [722, 768, 20, 24, 0],
];

function Relief2D() {
  return (
    <g transform="scale(0.3333) translate(-124 -62)">
      <clipPath id="mapClip">
        <rect x="124" y="62" width="702" height="796" />
      </clipPath>
      <g clipPath="url(#mapClip)">
        <g filter="url(#softer)">
          {haze.map(([cx, cy, rx, ry, rot, op], i) => (
            <ellipse key={i} cx={cx} cy={cy} rx={rx} ry={ry} transform={`rotate(${rot} ${cx} ${cy})`} fill="#e8d8d8" opacity={op} />
          ))}
        </g>
        <g filter="url(#soft)">
          <circle cx="735" cy="337" r="33" fill="#f0c8c8" />
          <circle cx="370" cy="490" r="27" fill="#f6a8a8" />
          {halos.map(([cx, cy, rx, ry, rot], i) => (
            <ellipse key={i} cx={cx} cy={cy} rx={rx} ry={ry} transform={`rotate(${rot} ${cx} ${cy})`} fill="#f4eeee" />
          ))}
          <ellipse cx="250" cy="446" rx="20" ry="18" fill="#b9c0bd" />
          <ellipse cx="464" cy="384" rx="18" ry="24" fill="#777" />
          <ellipse cx="468" cy="630" rx="36" ry="20" fill="#888" />
          <ellipse cx="500" cy="662" rx="36" ry="20" fill="#777" />
        </g>

        {/* blue, top left */}
        <path d="M158 185l22-32 36-10 40 18 8 18 10 10-4 20-18 6-20 22-44 6-30-14z" fill="#a3a3a3" stroke="#333" strokeWidth="4" />
        <path d="M162 180l26-28 34-4 30 24 6 30-22 26-42 10-30-20z" fill="#b5b5b5" stroke="#444" strokeWidth="3" />
        <path d="M166 186l22-26 32-4 28 22 2 24-22 24-36 4-22-18z" fill="#8fe8f8" stroke="#888" strokeWidth="2" />
        <path d="M172 190l20-24 30-4 24 20-2 28-24 18-28-4-18-16z" fill="#1b12f0" />
        <ellipse cx="223" cy="187" rx="22" ry="20" fill="#8010f0" />

        {/* large taupe peak */}
        <path d="M343 205l24-30 4-35 22-34 24-10 26 10 22 40 4 40-6 60-22 26-24 6-34-8-32-20-10-22z" fill="#a3958f" stroke="#3a3a48" strokeWidth="4" />
        <path d="M350 215l16-22M352 232l20-40M360 244l12-60" stroke="#30306a" strokeWidth="3" />
        <path d="M370 180l6-38 20-30 22-8 22 12 18 34 6 40-6 50-26 24-26 2-24-12-12-30z" fill="#b8a39a" stroke="#8a7a80" strokeWidth="2" />
        <path d="M378 180l8-36 28-22 26 18 14 44-8 50-30 18-26-14zM386 185l8-34 22-16 18 16 8 38-8 36-22 14-20-16z" fill="none" stroke="#7c8a78" strokeWidth="2" />
        <path d="M384 204h40v16l-12 12-16-4z" fill="#7b1678" />
        <path d="M444 158h10v58l-8 6-4-20z" fill="#f890b8" />
        <ellipse cx="417" cy="190" rx="15" ry="20" fill="#f0e090" stroke="#111" strokeWidth="7" />
        <ellipse cx="417" cy="191" rx="6" ry="13" fill="#c02030" />

        {/* upper right pair */}
        <path d="M545 200l8-28 34-20 36-6 28-22 34 6 2 22-16 26-20 12-10 26-26 22-34-4-30-18z" fill="#666" stroke="#1a1a1a" strokeWidth="4" />
        <path d="M626 150l28-24 26 4-2 24-24 24-22-4z" fill="#201a78" stroke="#888" strokeWidth="3" />
        <path d="M656 142h18l2 22-16 6z" fill="#c81e1e" />
        <path d="M556 200l10-28 34-16 32 10 10 28-12 26-28 14-30-10z" fill="#bfbfbf" stroke="#222" strokeWidth="3" />
        <path d="M564 200l10-26 28-10 28 12 6 22-14 26-24 10-22-12z" fill="#dcefd4" stroke="#6a7a6a" strokeWidth="2" />
        <ellipse cx="596" cy="194" rx="22" ry="22" fill="#c49a70" stroke="#4a4a80" strokeWidth="3" />
        <path d="M588 180h16v26h-16z" fill="#9b20d8" stroke="#6a7030" strokeWidth="3" />

        <rect x="753" y="193" width="11" height="30" fill="#111" />
        <path d="M504 270l14-14 16 14v16l-16 16-14-14z" fill="#5a1fa0" stroke="#444" strokeWidth="4" />

        {/* grey pair, left */}
        <path d="M174 346l8 20 12 12 18-6-2-30z" fill="#d0d4d2" stroke="#444" strokeWidth="3" />
        <ellipse cx="189" cy="325" rx="25" ry="28" fill="#a6aaa8" stroke="#444" strokeWidth="3" />

        {/* red and orange */}
        <path d="M468 366h20v28h-20z" fill="#333" />
        <path d="M484 350l22-22 28 4 18 30 2 38-18 26-28 2-14-26-12-24z" fill="#999" stroke="#222" strokeWidth="4" />
        <path d="M490 350l20-14 22 6 14 30-2 34-18 14-16-12-14-28z" fill="#e8231c" stroke="#54206a" strokeWidth="4" />
        <ellipse cx="522" cy="378" rx="19" ry="23" fill="#ff8a20" />
        <ellipse cx="522" cy="382" rx="16" ry="18" fill="#3a50d8" />
        <path d="M508 376h28v26h-28z" fill="#50b878" />
        <path d="M512 380h20v20h-20z" fill="#fff" />

        {/* tall, right */}
        <path d="M588 380l12-40 10-36 28-16 30 8 18 40-4 50-14 46-12 22-32 6-28-24-10-28z" fill="#8f8f94" stroke="#333" strokeWidth="4" />
        <path d="M592 375l14-30 2 70 20 22 34 2-8 12-30-4-24-22-10-26z" fill="#281c88" stroke="#444" strokeWidth="2" />
        <path d="M608 350l10-44 22-12 24 12 8 46-2 50-16 26-24 2-20-28z" fill="#b09c94" stroke="#555" strokeWidth="3" />
        <path d="M612 330l22-22 22 20v16l-22-14-20 16z" fill="#8adf60" />
        <path d="M616 340l18-18 18 18v8l-18-14-18 14z" fill="#30b8e8" />
        <path d="M664 314l14 14 2 30-14 20-6-30z" fill="#52e81c" />
        <ellipse cx="635" cy="378" rx="21" ry="27" fill="#b09c94" stroke="#8a7c88" strokeWidth="3" />
        <ellipse cx="635" cy="378" rx="16" ry="22" fill="none" stroke="#8a7c88" strokeWidth="3" />
        <path d="M624 368l12-8 12 10v12l-12 10-12-8z" fill="#e0103c" />

        {/* blue and green, lower right */}
        <path d="M538 478l24-18 40-6 32 14-4 14-40 4z" fill="#888" stroke="#222" strokeWidth="4" />
        <path d="M536 505l14-32 46 8 44 8 34 10 12 28-16 24-46 6-42 12-30-16z" fill="#4a4a4a" stroke="#111" strokeWidth="4" />
        <path d="M548 518l14-36 44-2 36 16 14 28-24 24-42 10-28-10z" fill="#a8a8a8" stroke="#333" strokeWidth="3" />
        <path d="M558 522l14-28 34-10 32 16 6 20-22 24-36 10-22-10z" fill="#e4f8f4" stroke="#608080" strokeWidth="3" />
        <path d="M576 510l10-18 22-2 14 14-16 12-8 24-16-10z" fill="#1f48e8" />
        <path d="M582 520l20-6 8 20-16 16-14-8z" fill="#a078d8" stroke="#806a60" strokeWidth="2" />
        <path d="M564 520h18v24h-18z" fill="#8ed810" stroke="#c07030" strokeWidth="3" />

        {/* pink */}
        <path d="M164 640l4-26 26-14 40-2 30 20 4 26-20 20-38 4-18 8-18-16z" fill="#999" stroke="#222" strokeWidth="4" />
        <path d="M176 636l16-28 34-6 26 14 10 22-20 22-44 2z" fill="#c8c8c8" stroke="#111" strokeWidth="4" />
        <path d="M194 628l14-18 24 0 14 16 0 20-14 14-24 0-14-14z" fill="#ff96d0" stroke="#602a68" strokeWidth="4" />

        {/* orange to blue chain */}
        <path d="M398 612l16-18 18 0 14 18-4 24-20 12-20-14z" fill="#888" stroke="#222" strokeWidth="4" />
        <path d="M406 614l10-12 16 4 6 18-12 12-14-2z" fill="#ff7a10" stroke="#40206a" strokeWidth="4" />
        <path d="M470 636l16-16 40-18 40-4 30 20 6 16-18 24-40 12-32 8-26-14z" fill="#777" stroke="#1a1a1a" strokeWidth="4" />
        <path d="M486 640l10-18 34-8 36 0 20 24-14 18-40 4-32 6z" fill="#b8d8c0" stroke="#333" strokeWidth="3" />
        <path d="M516 612l16-10 12 0 0 12 10 8-20 6z" fill="#8a1414" />
        <path d="M504 640l16-14 24 4 4 20-24 10-20-4z" fill="#fff" />
        <rect x="550" y="612" width="34" height="32" fill="#d8ecff" stroke="#333" strokeWidth="2" />
        <rect x="556" y="617" width="24" height="22" fill="#1f68e0" />

        {/* green, bottom */}
        <path d="M440 768l10-24 34-10 44-2 24 16 6 24-22 24-36 12-30-10-22-14z" fill="#666" stroke="#111" strokeWidth="4" />
        <path d="M460 770l10-28 34-6 36 4 14 22-10 24-30 14-32-4z" fill="#9c8c98" stroke="#222" strokeWidth="3" />
        <path d="M528 738l16 10 4 22-18 24-16 2z" fill="#a048a8" stroke="#401860" strokeWidth="2" />
        <path d="M482 760l12-18 28 0 16 16 0 20-14 16-28 0-14-14z" fill="#94e09c" stroke="#c088b0" strokeWidth="3" />

        <path d="M708 762l10-12h10l10 12v16l-8 10h-12l-10-10z" fill="#555" stroke="#222" strokeWidth="3" />
      </g>
    </g>
  );
}

function Plot() {
  return (
    <svg className="block min-h-0 min-w-0 flex-1" fontFamily="Open Sans, sans-serif" role="img" aria-label="Plot1">
      <g transform="translate(-324 -203)">
        {/* 3D surfaces */}
        <path d="M341 291l115-12 14-3 185 4-22 22-70-1-90-5-90-2z" fill="#cb7800" />
        <path d="M633 302.500l23-22" stroke="#3a2a10" strokeWidth="1.500" />
        <path d="M341 291l30 1.500M480 296l150 6.500M390 286l66-7M470 276.500h14" stroke="#5a4520" strokeWidth=".6" />
        <path d="M441 283l1.500-15 2 9 4 7z" fill="#9c3a14" />
        <path d="M438 296h7l-2 15-1 21h-1.500l-1-17z" fill="#000" />
        <circle cx="585" cy="285" r=".8" fill="#7a4a08" />
        <path d="M656 290.500l209-17.500 15 2 105 18.500-170 7.500-48-2c-3 3-5 12-5 20l-2 38h-7l-1-30c-1-16-2-25-6-29z" fill="#000" />

        <MapFrame x={379.500} y={411.500} fill="#ff9500">
          <ellipse cx="94" cy="44" rx="3" ry="8" fill="#f8d818" opacity=".8" />
          <ellipse cx="94" cy="44" rx="1.800" ry="4.500" fill="#2a6a5a" />
          <ellipse cx="98" cy="44" rx="1.200" ry="6" fill="#f07010" />
          <ellipse cx="101.500" cy="46" rx="1.500" ry="5" fill="#f8d818" opacity=".8" />
        </MapFrame>

        <text
          x="382"
          y="546"
          fill="#f8b061"
          stroke="#7d4500"
          strokeWidth="4"
          strokeLinejoin="round"
          fontFamily="Roboto, sans-serif"
          fontSize="27"
          fontWeight="700"
          className="[filter:drop-shadow(2px_0_0_#7d4500)_drop-shadow(2px_1px_0_#7d4500)] [paint-order:stroke]"
        >
          definemekani.com
        </text>

        <MapFrame x={696.500} y={390.500} fill="#ff0000" labels>
          <Relief2D />
        </MapFrame>

        {/* selection */}
        <rect x="668.500" y="386.500" width="274" height="283" fill="none" stroke="#6f9cc4" />
        {[[665.500, 383], [805.500, 383], [945.500, 383], [665.500, 527], [945.500, 527], [665.500, 673], [805.500, 673], [945.500, 673]].map(([x, y]) => (
          <rect key={`${x}-${y}`} x={x - 3} y={y - 3.500} width="6" height="7" fill="#22d822" stroke="#0c3c0c" />
        ))}
        {[[696.500, 390.500], [930.500, 390.500], [696.500, 656.500], [930.500, 656.500]].map(([x, y]) => (
          <circle key={`${x}-${y}`} cx={x} cy={y} r="3.500" fill="#3ce4f0" stroke="#103c48" />
        ))}
      </g>
    </svg>
  );
}

function Document() {
  return (
    <main className="flex min-w-0 flex-1 flex-col border-l border-t border-[#9aa0a8] bg-[#e6eaef]">
      <div className="flex h-6 items-end border-b border-[#9aa0a8] bg-gradient-to-b from-[#e2e7ed] to-white">
        <button aria-label="Scroll tabs" className="ml-[5px] self-center">
          <Ico w={6} h={9}>
            <path d="M5.500 1v7L.8 4.500z" stroke="#888" />
          </Ico>
        </button>
        <svg width="18" height="22" className="-mb-px ml-2 block" aria-hidden="true">
          <path d="M0 22C7 20 9 .5 18 .5V22z" fill="#fff" />
          <path d="M0 21.500L14 2.500Q16 .5 18 .5" fill="none" stroke="#9aa0a8" />
        </svg>
        <div className="-mb-px flex h-[22px] items-center gap-[9px] border-r border-t border-[#9aa0a8] bg-white pl-1 pr-1">
          <button className="font-bold text-[#444]">Plot1*</button>
          <button aria-label="Close Plot1">
            <Cross />
          </button>
        </div>
      </div>
      <div className="ml-[2px] flex min-h-0 flex-1 flex-col border-l border-t border-[#9aa0a8] bg-white pl-px pt-px">
        <div className="flex min-h-0 flex-1 flex-col border-l border-t border-[#222]">
          <div className="flex">
            <span className="h-[21px] w-[19px] shrink-0 border-b border-r border-[#222] bg-white" />
            <TopRuler />
          </div>
          <div className="flex min-h-0 flex-1">
            <LeftRuler />
            <Plot />
          </div>
        </div>
      </div>
    </main>
  );
}

export default function App() {
  return (
    <div className="flex h-screen flex-col overflow-hidden bg-[#e1e6eb] font-[Roboto,'Open_Sans',sans-serif] text-[12px]">
      <Defs />
      <div className="shrink-0 bg-gradient-to-b from-white to-[#eff0f2]">
        <TitleBar />
        <TabBar />
      </div>
      <div className="shrink-0">
        <Ribbon />
      </div>
      <div className="flex min-h-0 flex-1 pt-[2px]">
        <aside className="mr-[7px] flex w-[292px] shrink-0 flex-col overflow-hidden">
          <Contents />
          <Properties />
        </aside>
        <Document />
      </div>
    </div>
  );
}
